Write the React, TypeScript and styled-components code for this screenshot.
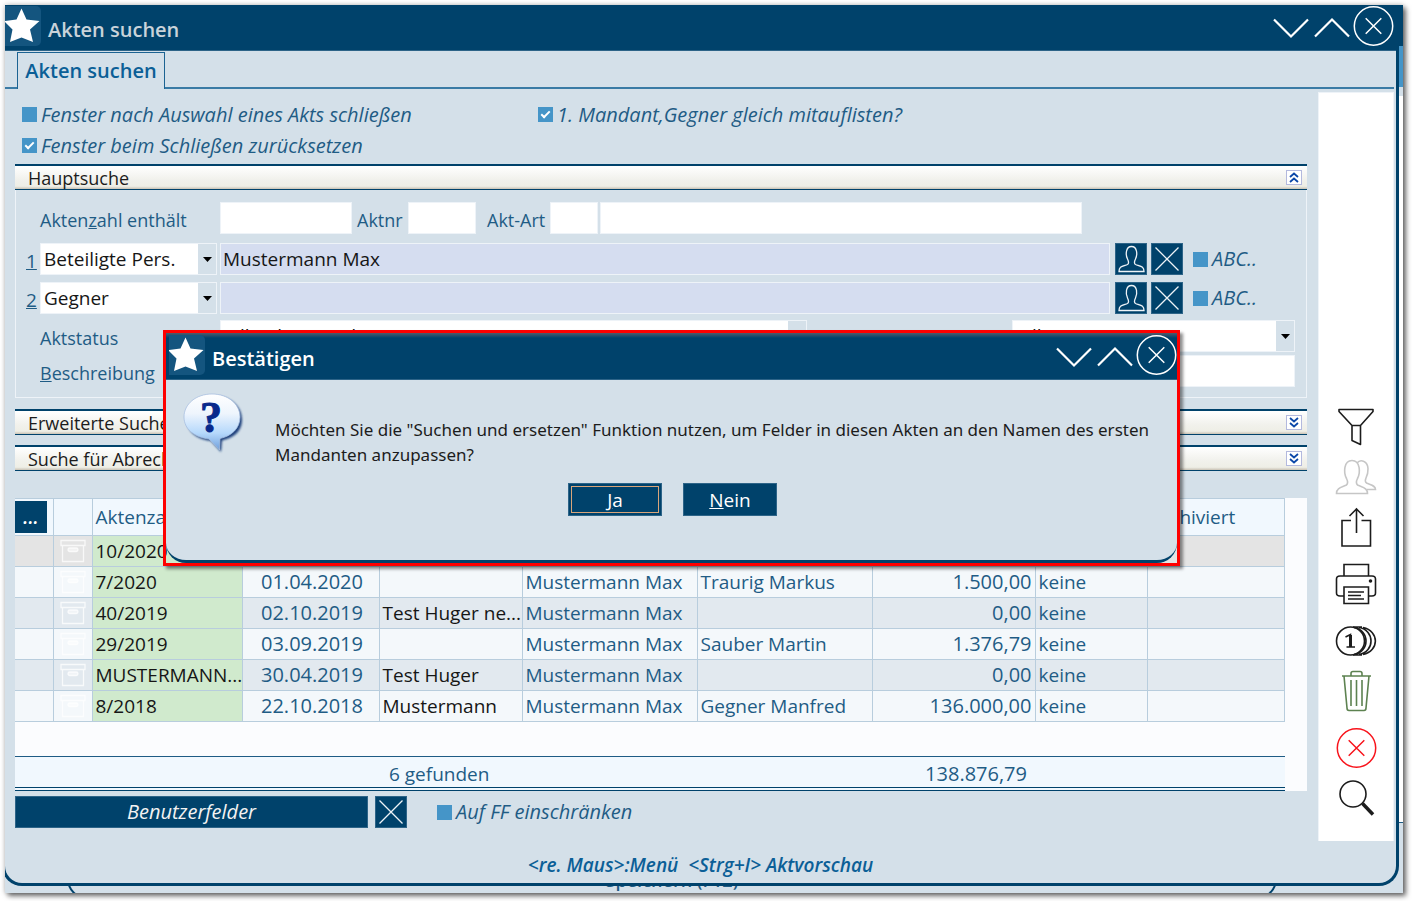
import React from "react";
import styled, { createGlobalStyle, css } from "styled-components";

const navy = "#00426b";
const ink = "#1f5c85";
const surface = "#d4e0e9";
const accent = "#4595c8";
const edge = "#eef3f8";

const GlobalStyle = createGlobalStyle`
  *, *::before, *::after { box-sizing: border-box; }
  body {
    margin: 0;
    padding: 5px 9px 9px 5px;
    background: #fff;
    color: ${ink};
    font: 19px/26px "Open Sans", "Noto Sans", sans-serif;
  }
  button, input, select { font: inherit; color: inherit; margin: 0; border-radius: 0; }
  button { padding: 0; border: 0; background: none; cursor: pointer; }
  svg { display: block; }
`;

/* ---------- desktop and windows ---------- */

const Desktop = styled.div`
  position: relative;
  display: grid;
  overflow: hidden;
  background: ${surface};
  box-shadow: 3px 3px 5px rgba(0, 0, 0, 0.55), 0 0 5px rgba(0, 0, 0, 0.25);
`;

const BackWindow = styled.div`
  grid-area: 1 / 1;
  display: flex;
  flex-direction: column;
  min-width: 0;
`;

const BackStrip = styled.div<{ $h: number; $bg: string }>`
  height: ${(p) => p.$h}px;
  background: ${(p) => p.$bg};
`;

const BackBody = styled.div`
  flex: 1;
  background: #fff;
`;

const BackFooter = styled.div`
  height: 71px;
  padding: 0 126px 0 62px;
  border-top: 1px solid ${ink};
`;

const BackAction = styled.div`
  height: 76px;
  padding-top: 44px;
  text-align: center;
  font-size: 18px;
  font-weight: 600;
  color: ${ink};
  border: 2px solid ${navy};
  border-top: 0;
  border-radius: 0 0 20px 20px;
`;

const Window = styled.section`
  grid-area: 1 / 1;
  z-index: 1;
  min-width: 0;
  margin: 0 4px 7px -3px;
  display: flex;
  flex-direction: column;
  background: ${surface};
  border: solid ${navy};
  border-width: 0 3px 3px 3px;
  border-radius: 0 0 20px 20px;
`;

const TitleBar = styled.header<{ $dialog?: boolean }>`
  display: flex;
  align-items: flex-start;
  height: ${(p) => (p.$dialog ? 47 : 46)}px;
  padding: ${(p) => (p.$dialog ? "2px 0 0 3px" : "1px 2px 0 0")};
  background: ${(p) =>
    p.$dialog ? `linear-gradient(#4f5a6b, ${navy} 5px)` : navy};
  border-bottom: 1px solid #2d6488;
`;

const AppIcon = styled.span`
  width: 36px;
  height: 40px;
  border-radius: 0 5px 5px 0;
  background: #14557f;
`;

const WindowTitle = styled.h1<{ $bright?: boolean }>`
  flex: 1;
  margin: 0;
  padding: 11px 0 0 7px;
  font-size: 20px;
  line-height: 26px;
  font-weight: 600;
  color: ${(p) => (p.$bright ? "#fff" : "#c9d3da")};
`;

const WindowControls = styled.div`
  display: flex;
  gap: 1px;
`;

/* ---------- tabs ---------- */

const TabBar = styled.nav`
  display: flex;
  height: 38px;
  padding-top: 1px;
  margin-right: 2px;
  &::before {
    content: "";
    width: 12px;
    border-bottom: 2px solid #3a7ba5;
  }
  &::after {
    content: "";
    flex: 1;
    border-bottom: 2px solid #3a7ba5;
  }
`;

const Tab = styled.button`
  width: 148px;
  border: 1px solid #1c6392;
  border-bottom: 0;
  font-size: 20px;
  font-weight: 600;
  color: #0b5f97;
`;

/* ---------- page body ---------- */

const Body = styled.div`
  display: flex;
  gap: 11px;
  padding: 2px 2px 0 10px;
`;

const Main = styled.main`
  flex: 1;
  min-width: 0;
`;

const Options = styled.div`
  display: grid;
  grid-template-columns: 516px 1fr;
  grid-auto-rows: 31px;
  align-items: center;
  padding: 8px 0 3px 7px;
`;

const CheckLabel = styled.label`
  display: flex;
  align-items: center;
  gap: 4px;
  font-size: 20px;
  font-style: italic;
  white-space: nowrap;
`;

const CheckBox = styled.input.attrs({ type: "checkbox" })`
  appearance: none;
  flex: none;
  display: grid;
  place-items: center;
  width: 15px;
  height: 15px;
  background: ${accent};
  &:checked::after {
    content: "";
    width: 9px;
    height: 5px;
    margin-top: -3px;
    border: solid #fff;
    border-width: 0 0 2px 2px;
    transform: rotate(-45deg);
  }
`;

const SectionBar = styled.button`
  display: flex;
  align-items: center;
  justify-content: space-between;
  width: 100%;
  height: 26px;
  padding: 0 5px 0 13px;
  font-size: 18px;
  color: #1c1c1c;
  border: solid ${navy};
  border-width: 2px 0 1px;
  background: linear-gradient(#fff, #f1f1ec 60%, #eeeee6 88%, #c9c2b4);
  & + & { margin-top: 10px; }
`;

const Chevrons = styled.span`
  width: 16px;
  height: 15px;
  background: #fff;
  border: 1px solid #b3b9de;
`;

const Group = styled.fieldset`
  display: flex;
  flex-direction: column;
  margin: 0 0 11px;
  padding: 12px 11px 10px 8px;
  border: 1px solid ${edge};
  border-top: 0;
  min-width: 0;
`;

const FieldRow = styled.div<{ $gap?: number }>`
  display: flex;
  align-items: center;
  height: 32px;
  margin-bottom: ${(p) => p.$gap ?? 0}px;
`;

const FieldLabel = styled.label<{ $w: number; $pad?: number }>`
  flex: none;
  width: ${(p) => p.$w}px;
  padding-left: ${(p) => p.$pad ?? 0}px;
  padding-top: 4px;
  font-size: 18px;
  white-space: nowrap;
`;

const RowKey = styled.label`
  flex: none;
  width: 16px;
  padding-top: 4px;
  padding-left: 2px;
  text-decoration: underline;
`;

const Field = styled.input<{ $w?: number; $tint?: boolean }>`
  ${(p) => (p.$w ? css`flex: none; width: ${p.$w}px;` : css`flex: 1; min-width: 0;`)}
  height: 32px;
  padding: 0 2px;
  color: #161616;
  background: ${(p) => (p.$tint ? "#d5ddf0" : "#fff")};
  border: 1px solid ${edge};
`;

const SelectBox = styled.div<{ $w?: number }>`
  position: relative;
  ${(p) => (p.$w ? css`flex: none; width: ${p.$w}px;` : css`flex: 1; min-width: 0;`)}
  svg {
    position: absolute;
    right: 5px;
    top: 14px;
    pointer-events: none;
  }
`;

const Select = styled.select<{ $inset?: boolean }>`
  appearance: none;
  display: block;
  width: 100%;
  height: 32px;
  padding: 0 20px 0 ${(p) => (p.$inset ? 7 : 3)}px;
  color: #161616;
  border: 1px solid ${edge};
  background: linear-gradient(to left, ${surface} 18px, #fff 18px);
`;

const SquareButton = styled.button`
  display: grid;
  place-items: center;
  flex: none;
  width: 32px;
  height: 32px;
  background: ${navy};
  border: 1px solid #2d6488;
`;

const Spacer = styled.span<{ $w: number }>`
  flex: none;
  width: ${(p) => p.$w}px;
`;

/* ---------- results ---------- */

const Results = styled.div`
  margin-top: 27px;
  background: #fbfcfe;
  padding-right: 22px;
`;

const Table = styled.table`
  width: 100%;
  table-layout: fixed;
  border-collapse: collapse;
`;

const Th = styled.th`
  height: 37px;
  padding: 0 3px;
  text-align: left;
  font-weight: 400;
  background: #f1f8fe;
  border: 1px solid #b8cddd;
  border-left-width: 0;
`;

const Td = styled.td<{ $kind?: "key" | "num" | "date" | "dark" | "icon" }>`
  height: 31px;
  padding: 0 0 0 3px;
  line-height: 28px;
  white-space: nowrap;
  border: 1px solid #b8cddd;
  border-left-width: 0;
  ${(p) => p.$kind === "key" && css`background: #d0eacd; color: #161616;`}
  ${(p) => p.$kind === "dark" && css`color: #161616;`}
  ${(p) => p.$kind === "date" && css`text-align: center; font-size: 20px;`}
  ${(p) => p.$kind === "num" && css`padding-right: 3px; text-align: right; font-size: 20px;`}
  ${(p) => p.$kind === "icon" && css`padding-left: 6px;`}
`;

const Tr = styled.tr<{ $tone: "current" | "odd" | "even" }>`
  background: ${(p) =>
    ({ current: "#e4e4e4", odd: "#f4f8fb", even: "#e2e9ef" })[p.$tone]};
`;

const MoreButton = styled.button`
  display: block;
  width: 32px;
  height: 32px;
  margin-left: -3px;
  color: #fff;
  font-weight: 600;
  font-style: italic;
  background: ${navy};
`;

const Summary = styled.div`
  display: grid;
  grid-template-columns: 364px 493px 163px 1fr;
  height: 35px;
  margin-top: 34px;
  align-items: center;
  background: #f1f8fe;
  border-top: 1px solid ${ink};
  border-bottom: 4px double ${navy};
`;

const Found = styled.span`
  grid-column: 2;
  padding: 4px 0 0 10px;
`;

const Total = styled.span`
  grid-column: 3;
  padding: 4px 8px 0 0;
  text-align: right;
  font-size: 20px;
`;

const Actions = styled.div`
  display: flex;
  align-items: center;
  padding: 5px 0 13px;
`;

const WideButton = styled.button`
  width: 353px;
  height: 32px;
  margin-right: 7px;
  color: #f2f2f2;
  font-size: 20px;
  font-style: italic;
  background: ${navy};
  border: 1px solid #2d6488;
`;

const Hint = styled.p`
  margin: 0;
  padding: 11px 0 5px;
  text-align: center;
  font-weight: 600;
  font-style: italic;
  white-space: pre;
  color: #0b5f97;
`;

/* ---------- side toolbar ---------- */

const SideBar = styled.aside`
  flex: none;
  display: flex;
  flex-direction: column;
  justify-content: flex-end;
  gap: 7px;
  width: 76px;
  margin-top: 1px;
  padding-bottom: 18px;
  background: #fff;
  border: solid ${edge};
  border-width: 1px 1px 0;
`;

const ToolGroup = styled.div`
  display: flex;
  flex-direction: column;
`;

const Tool = styled.button`
  display: grid;
  place-items: center;
  height: 50px;
`;

/* ---------- dialog ---------- */

const Dialog = styled.div`
  position: absolute;
  z-index: 2;
  top: 325px;
  left: 158px;
  right: 223px;
  border: 3px solid #fe0000;
  box-shadow: 3px 3px 3px rgba(0, 0, 0, 0.45);
`;

const DialogBody = styled.div`
  display: grid;
  grid-template-columns: 109px 1fr;
  grid-template-rows: 103px 33px;
  height: 183px;
  background: ${surface};
  border: solid ${navy};
  border-width: 0 0 3px;
  border-radius: 0 0 20px 20px;
`;

const BubbleIcon = styled.span`
  padding: 12px 0 0 16px;
`;

const Message = styled.p`
  margin: 0;
  padding-top: 37px;
  font-family: "Noto Sans", "Open Sans", sans-serif;
  font-size: 17px;
  line-height: 25px;
  white-space: nowrap;
  color: #1c1c1c;
`;

const DialogButtons = styled.div`
  grid-column: 1 / 3;
  display: flex;
  gap: 21px;
  padding-left: 402px;
`;

const DialogButton = styled.button<{ $focused?: boolean }>`
  width: 94px;
  height: 33px;
  color: #fff;
  background: ${navy};
  border: 1px solid #2d6488;
  ${(p) => p.$focused && css`outline: 1px solid #d9a57a; outline-offset: -4px;`}
`;

/* ---------- drawings ---------- */

const Star = () => (
  <svg width="36" height="40" viewBox="0 0 36 40">
    <path
      fill="#fff"
      d="M16.500 2.500 21.500 13.500 34.500 15 25 23.500 28 36 16.500 31.500 5 36 7.500 23.500 -1 15 11.500 13.500Z"
    />
  </svg>
);

const ChevronDown = () => (
  <svg width="40" height="40" viewBox="0 0 40 40" fill="none" stroke="#fff" strokeWidth="2.200">
    <path d="M3 12.500 20 29.500 37 12.500" />
  </svg>
);

const ChevronUp = () => (
  <svg width="40" height="40" viewBox="0 0 40 40" fill="none" stroke="#fff" strokeWidth="2.200">
    <path d="M3 29.500 20 12.500 37 29.500" />
  </svg>
);

const CircleX = ({ color = "#fff" }: { color?: string }) => (
  <svg width="41" height="41" viewBox="0 0 41 41" fill="none" stroke={color} strokeWidth="1.500">
    <circle cx="20.500" cy="20" r="19.200" />
    <path d="M12.700 12.200 28.300 27.800M28.300 12.200 12.700 27.800" />
  </svg>
);

const Caret = () => (
  <svg width="9" height="5" viewBox="0 0 9 5">
    <path d="M0 0H9L4.500 5Z" fill="#000" />
  </svg>
);

const DoubleChevron = ({ up }: { up?: boolean }) => (
  <svg width="14" height="13" viewBox="0 0 14 13" fill="none" stroke="#0b47a8" strokeWidth="1.800">
    <path d={up ? "M3 6 7 2.500 11 6M3 11 7 7.500 11 11" : "M3 2 7 5.500 11 2M3 7 7 10.500 11 7"} />
  </svg>
);

const Person = () => (
  <svg width="30" height="30" viewBox="0 0 30 30" fill="none" stroke="#eef3f7" strokeWidth="1.300">
    <path d="M3 27.500H28C28 22.500 25 22.500 19.500 20.500C18 19.500 18.500 17 19.500 15C21.500 11 21.500 2.500 15.500 2.500C9.500 2.500 9.500 11 11.500 15C12.500 17 13 19.500 11.500 20.500C6 22.500 3 22.500 3 27.500Z" />
  </svg>
);

const Cross = () => (
  <svg width="30" height="30" viewBox="0 0 30 30" stroke="#eef3f7" strokeWidth="1.300">
    <path d="M3.500 3.500 26.500 26.500M26.500 3.500 3.500 26.500" />
  </svg>
);

const ArchiveBox = () => (
  <svg width="26" height="24" viewBox="0 0 26 24" fill="none" stroke="#fff" strokeOpacity="0.750" strokeWidth="1.300">
    <path d="M1 1.500H25V6.500H1ZM2.500 6.500V22.500H23.500V6.500" />
    <rect x="8" y="9" width="10" height="3.500" rx="1.700" fill="#fff" fillOpacity="0.500" />
  </svg>
);

const tool = { fill: "none", stroke: "#1c1c1c", strokeWidth: 1.6 };

const Funnel = () => (
  <svg width="40" height="40" viewBox="0 0 40 40" {...tool}>
    <path d="M3 2.500H37V4.500L24.500 18.500V37.500L16 33.500V18.500L3 4.500ZM16 18.500H24.500" strokeLinejoin="round" />
  </svg>
);

const People = () => (
  <svg width="42" height="40" viewBox="0 0 42 40" fill="none" stroke="#c6c6c6" strokeWidth="1.600">
    <path d="M1.500 36.500H32.500C32.500 31 28 30.500 22.500 28C21 26.500 21.500 23.500 22.500 21.500C25.500 16 25.500 3.500 17 3.500C8.500 3.500 8.500 16 11.500 21.500C12.500 23.500 13 26.500 11.500 28C6 30.500 1.500 31 1.500 36.500Z" />
    <path d="M22 6C24 3.500 27 3.500 29 4.500C34.500 7 33.500 16 31 21C30 23 30 24.500 31.500 26C36 28 40.500 28.500 40.500 32.500H31.500" />
  </svg>
);

const Share = () => (
  <svg width="40" height="40" viewBox="0 0 40 40" {...tool}>
    <path d="M15 13.500H6V39H34.500V13.500H25.500M20.500 26V2M13.500 9 20.500 2 27.500 9" />
  </svg>
);

const Printer = () => (
  <svg width="42" height="42" viewBox="0 0 42 42" {...tool}>
    <path d="M9 13V1.500H33.500V13M9 33H5Q1.500 33 1.500 30V16Q1.500 13 5 13H37Q40.500 13 40.500 16V30Q40.500 33 37 33H33.500" />
    <path d="M9 24H33.500V40.500H9ZM13 29H29M13 32.500H26M13 36H29" />
    <circle cx="35.500" cy="18" r="1" fill="#1c1c1c" />
  </svg>
);

const Coins = () => (
  <svg width="42" height="32" viewBox="0 0 42 32" {...tool}>
    <circle cx="15.500" cy="16" r="14" />
    <path d="M19 2.500C35 5 35 27 19 29.500M24 2.500C40 5 40 27 24 29.500M28 2.500C44.500 6 44.500 26 28 29.500M18 2H27M18 30H27" />
    <path d="M10.500 12 15.500 9.500V22M11.500 22H20" strokeWidth="1.500" />
    <path d="M15.500 10V22" strokeWidth="3" />
  </svg>
);

const Trash = () => (
  <svg width="40" height="42" viewBox="0 0 40 42" fill="none" stroke="#5d8250" strokeWidth="1.600">
    <path d="M6 6H35M15 6V3.500Q15 1.500 17 1.500H24Q26 1.500 26 3.500V6M8 6 11 38Q11 40.500 13 40.500H28Q30 40.500 30 38L33 6M15 10V36M20.500 10V36M26 10V36" />
  </svg>
);

const Magnifier = () => (
  <svg width="40" height="40" viewBox="0 0 40 40" {...tool}>
    <circle cx="17" cy="16" r="13" />
    <path d="M26.500 25.500 37 36.500" strokeWidth="3.500" />
  </svg>
);

const QuestionBubble = () => (
  <svg width="62" height="62" viewBox="0 0 62 62">
    <defs>
      <linearGradient id="bubble" x1="0" y1="0" x2="0" y2="1">
        <stop offset="0" stopColor="#ffffff" />
        <stop offset="0.350" stopColor="#eef5fd" />
        <stop offset="0.700" stopColor="#b5d8fb" />
        <stop offset="1" stopColor="#6f9fdc" />
      </linearGradient>
      <filter id="soft" x="-20%" y="-20%" width="150%" height="150%">
        <feGaussianBlur stdDeviation="1" />
      </filter>
    </defs>
    <path
      fill="#1f3f7c"
      filter="url(#soft)"
      d="M32 4C48 4 60 14 60 28C60 39 52 46 40 48.500L39 60L29 49C14 47 5 39 5 28C5 14 16 4 32 4Z"
    />
    <path
      fill="url(#bubble)"
      stroke="#a8bfdf"
      strokeWidth="0.800"
      d="M30 2C46 2 58 12 58 25C58 36 50 44 38 46.500L37.500 58L27 47C12 45 2 37 2 25C2 12 14 2 30 2Z"
    />
    <text x="29" y="40" textAnchor="middle" fontFamily="Liberation Serif, serif" fontWeight="700" fontSize="44" fill="#08298c" stroke="#08298c">
      ?
    </text>
  </svg>
);

/* ---------- parts ---------- */

const Controls = () => (
  <WindowControls>
    <button aria-label="Minimieren"><ChevronDown /></button>
    <button aria-label="Maximieren"><ChevronUp /></button>
    <button aria-label="Schließen"><CircleX /></button>
  </WindowControls>
);

const Check = ({ text, on }: { text: string; on?: boolean }) => (
  <CheckLabel>
    <CheckBox defaultChecked={on} />
    {text}
  </CheckLabel>
);

const Section = ({ text, open }: { text: string; open?: boolean }) => (
  <SectionBar aria-expanded={!!open}>
    {text}
    <Chevrons><DoubleChevron up={open} /></Chevrons>
  </SectionBar>
);

type DropDownProps = { id: string; label?: string; value: string; w?: number; inset?: boolean };

const DropDown = ({ id, label, value, w, inset }: DropDownProps) => (
  <SelectBox $w={w}>
    <Select id={id} aria-label={label} defaultValue={value} $inset={inset}>
      <option>{value}</option>
    </Select>
    <Caret />
  </SelectBox>
);

const PersonRow = ({ n, kind, value }: { n: number; kind: string; value: string }) => (
  <FieldRow $gap={n === 1 ? 7 : 6}>
    <RowKey htmlFor={`kind${n}`}>{n}</RowKey>
    <DropDown id={`kind${n}`} value={kind} w={177} />
    <Spacer $w={3} />
    <Field $tint aria-label={kind} defaultValue={value} />
    <Spacer $w={5} />
    <SquareButton aria-label="Person wählen"><Person /></SquareButton>
    <Spacer $w={4} />
    <SquareButton aria-label="Leeren"><Cross /></SquareButton>
    <Spacer $w={10} />
    <Check text="ABC.." />
    <Spacer $w={38} />
  </FieldRow>
);

const columns = [38, 39, 150, 137, 143, 175, 175, 163, 112];

const rows = [
  ["10/2020", "", "", "", "", "", ""],
  ["7/2020", "01.04.2020", "", "Mustermann Max", "Traurig Markus", "1.500,00", "keine"],
  ["40/2019", "02.10.2019", "Test Huger ne...", "Mustermann Max", "", "0,00", "keine"],
  ["29/2019", "03.09.2019", "", "Mustermann Max", "Sauber Martin", "1.376,79", "keine"],
  ["MUSTERMANN...", "30.04.2019", "Test Huger", "Mustermann Max", "", "0,00", "keine"],
  ["8/2018", "22.10.2018", "Mustermann", "Mustermann Max", "Gegner Manfred", "136.000,00", "keine"],
];

const ResultTable = () => (
  <Table>
    <colgroup>
      {columns.map((w, i) => <col key={i} style={{ width: w }} />)}
      <col />
    </colgroup>
    <thead>
      <tr>
        <Th><MoreButton>...</MoreButton></Th>
        <Th />
        <Th>Aktenzahl</Th>
        <Th /><Th /><Th /><Th /><Th /><Th />
        <Th>Archiviert</Th>
      </tr>
    </thead>
    <tbody>
      {rows.map(([no, date, about, client, opponent, amount, lock], i) => (
        <Tr key={no} $tone={i === 0 ? "current" : i % 2 ? "odd" : "even"}>
          <Td />
          <Td $kind="icon"><ArchiveBox /></Td>
          <Td $kind="key">{no}</Td>
          <Td $kind="date">{date}</Td>
          <Td $kind="dark">{about}</Td>
          <Td>{client}</Td>
          <Td>{opponent}</Td>
          <Td $kind="num">{amount}</Td>
          <Td>{lock}</Td>
          <Td />
        </Tr>
      ))}
    </tbody>
  </Table>
);

const SideTools = () => (
  <SideBar>
    <ToolGroup>
      <Tool aria-label="Filter"><Funnel /></Tool>
      <Tool aria-label="Personen"><People /></Tool>
      <Tool aria-label="Exportieren"><Share /></Tool>
    </ToolGroup>
    <ToolGroup>
      <Tool aria-label="Drucken"><Printer /></Tool>
    </ToolGroup>
    <ToolGroup>
      <Tool aria-label="Beträge"><Coins /></Tool>
      <Tool aria-label="Löschen"><Trash /></Tool>
    </ToolGroup>
    <ToolGroup>
      <Tool aria-label="Abbrechen"><CircleX color="#f8141c" /></Tool>
      <Tool aria-label="Suchen"><Magnifier /></Tool>
    </ToolGroup>
  </SideBar>
);

const ConfirmDialog = () => (
  <Dialog role="dialog" aria-labelledby="confirm-title">
    <TitleBar $dialog>
      <AppIcon><Star /></AppIcon>
      <WindowTitle as="h2" id="confirm-title" $bright>Bestätigen</WindowTitle>
      <Controls />
    </TitleBar>
    <DialogBody>
      <BubbleIcon><QuestionBubble /></BubbleIcon>
      <Message>
        Möchten Sie die "Suchen und ersetzen" Funktion nutzen, um Felder in diesen Akten an den Namen des ersten
        <br />
        Mandanten anzupassen?
      </Message>
      <DialogButtons>
        <DialogButton $focused><u>J</u>a</DialogButton>
        <DialogButton><u>N</u>ein</DialogButton>
      </DialogButtons>
    </DialogBody>
  </Dialog>
);

export default function App() {
  return (
    <>
      <GlobalStyle />
      <Desktop>
        <BackWindow>
          <BackStrip $h={41} $bg={navy} />
          <BackStrip $h={41} $bg={accent} />
          <BackStrip $h={9} $bg={surface} />
          <BackBody />
          <BackFooter>
            <BackAction>Speichern (F12)</BackAction>
          </BackFooter>
        </BackWindow>

        <Window>
          <TitleBar>
            <AppIcon><Star /></AppIcon>
            <WindowTitle>Akten suchen</WindowTitle>
            <Controls />
          </TitleBar>
          <TabBar><Tab>Akten suchen</Tab></TabBar>
          <Body>
            <Main>
              <Options>
                <Check text="Fenster nach Auswahl eines Akts schließen" />
                <Check text="1. Mandant,Gegner gleich mitauflisten?" on />
                <Check text="Fenster beim Schließen zurücksetzen" on />
              </Options>
              <Section text="Hauptsuche" open />
              <Group>
                <FieldRow $gap={9}>
                  <FieldLabel htmlFor="number" $w={196} $pad={16}>Akten<u>z</u>ahl enthält</FieldLabel>
                  <Field id="number" $w={132} />
                  <FieldLabel htmlFor="fileno" $w={56} $pad={5}>Aktnr</FieldLabel>
                  <Field id="fileno" $w={68} />
                  <FieldLabel htmlFor="kind" $w={74} $pad={11}>Akt-Art</FieldLabel>
                  <Field id="kind" $w={48} />
                  <Spacer $w={2} />
                  <Field aria-label="Akt-Art" />
                  <Spacer $w={213} />
                </FieldRow>
                <PersonRow n={1} kind="Beteiligte Pers." value="Mustermann Max" />
                <PersonRow n={2} kind="Gegner" value="" />
                <FieldRow $gap={3}>
                  <FieldLabel htmlFor="status" $w={196} $pad={16}>Aktstatus</FieldLabel>
                  <DropDown id="status" value="Alle Akten und" inset />
                  <Spacer $w={205} />
                  <DropDown id="scope" label="Aktstatus" value="Alle" w={283} inset />
                </FieldRow>
                <FieldRow>
                  <FieldLabel htmlFor="about" $w={196} $pad={16}><u>B</u>eschreibung</FieldLabel>
                  <Field id="about" />
                </FieldRow>
              </Group>
              <Section text="Erweiterte Suche" />
              <Section text="Suche für Abrechnung" />
              <Results>
                <ResultTable />
                <Summary>
                  <Found>6 gefunden</Found>
                  <Total>138.876,79</Total>
                </Summary>
              </Results>
              <Actions>
                <WideButton>Benutzerfelder</WideButton>
                <SquareButton aria-label="Leeren"><Cross /></SquareButton>
                <Spacer $w={30} />
                <Check text="Auf FF einschränken" />
              </Actions>
            </Main>
            <SideTools />
          </Body>
          <Hint>{"<re. Maus>:Menü  <Strg+I> Aktvorschau"}</Hint>
        </Window>

        <ConfirmDialog />
      </Desktop>
    </>
  );
}
